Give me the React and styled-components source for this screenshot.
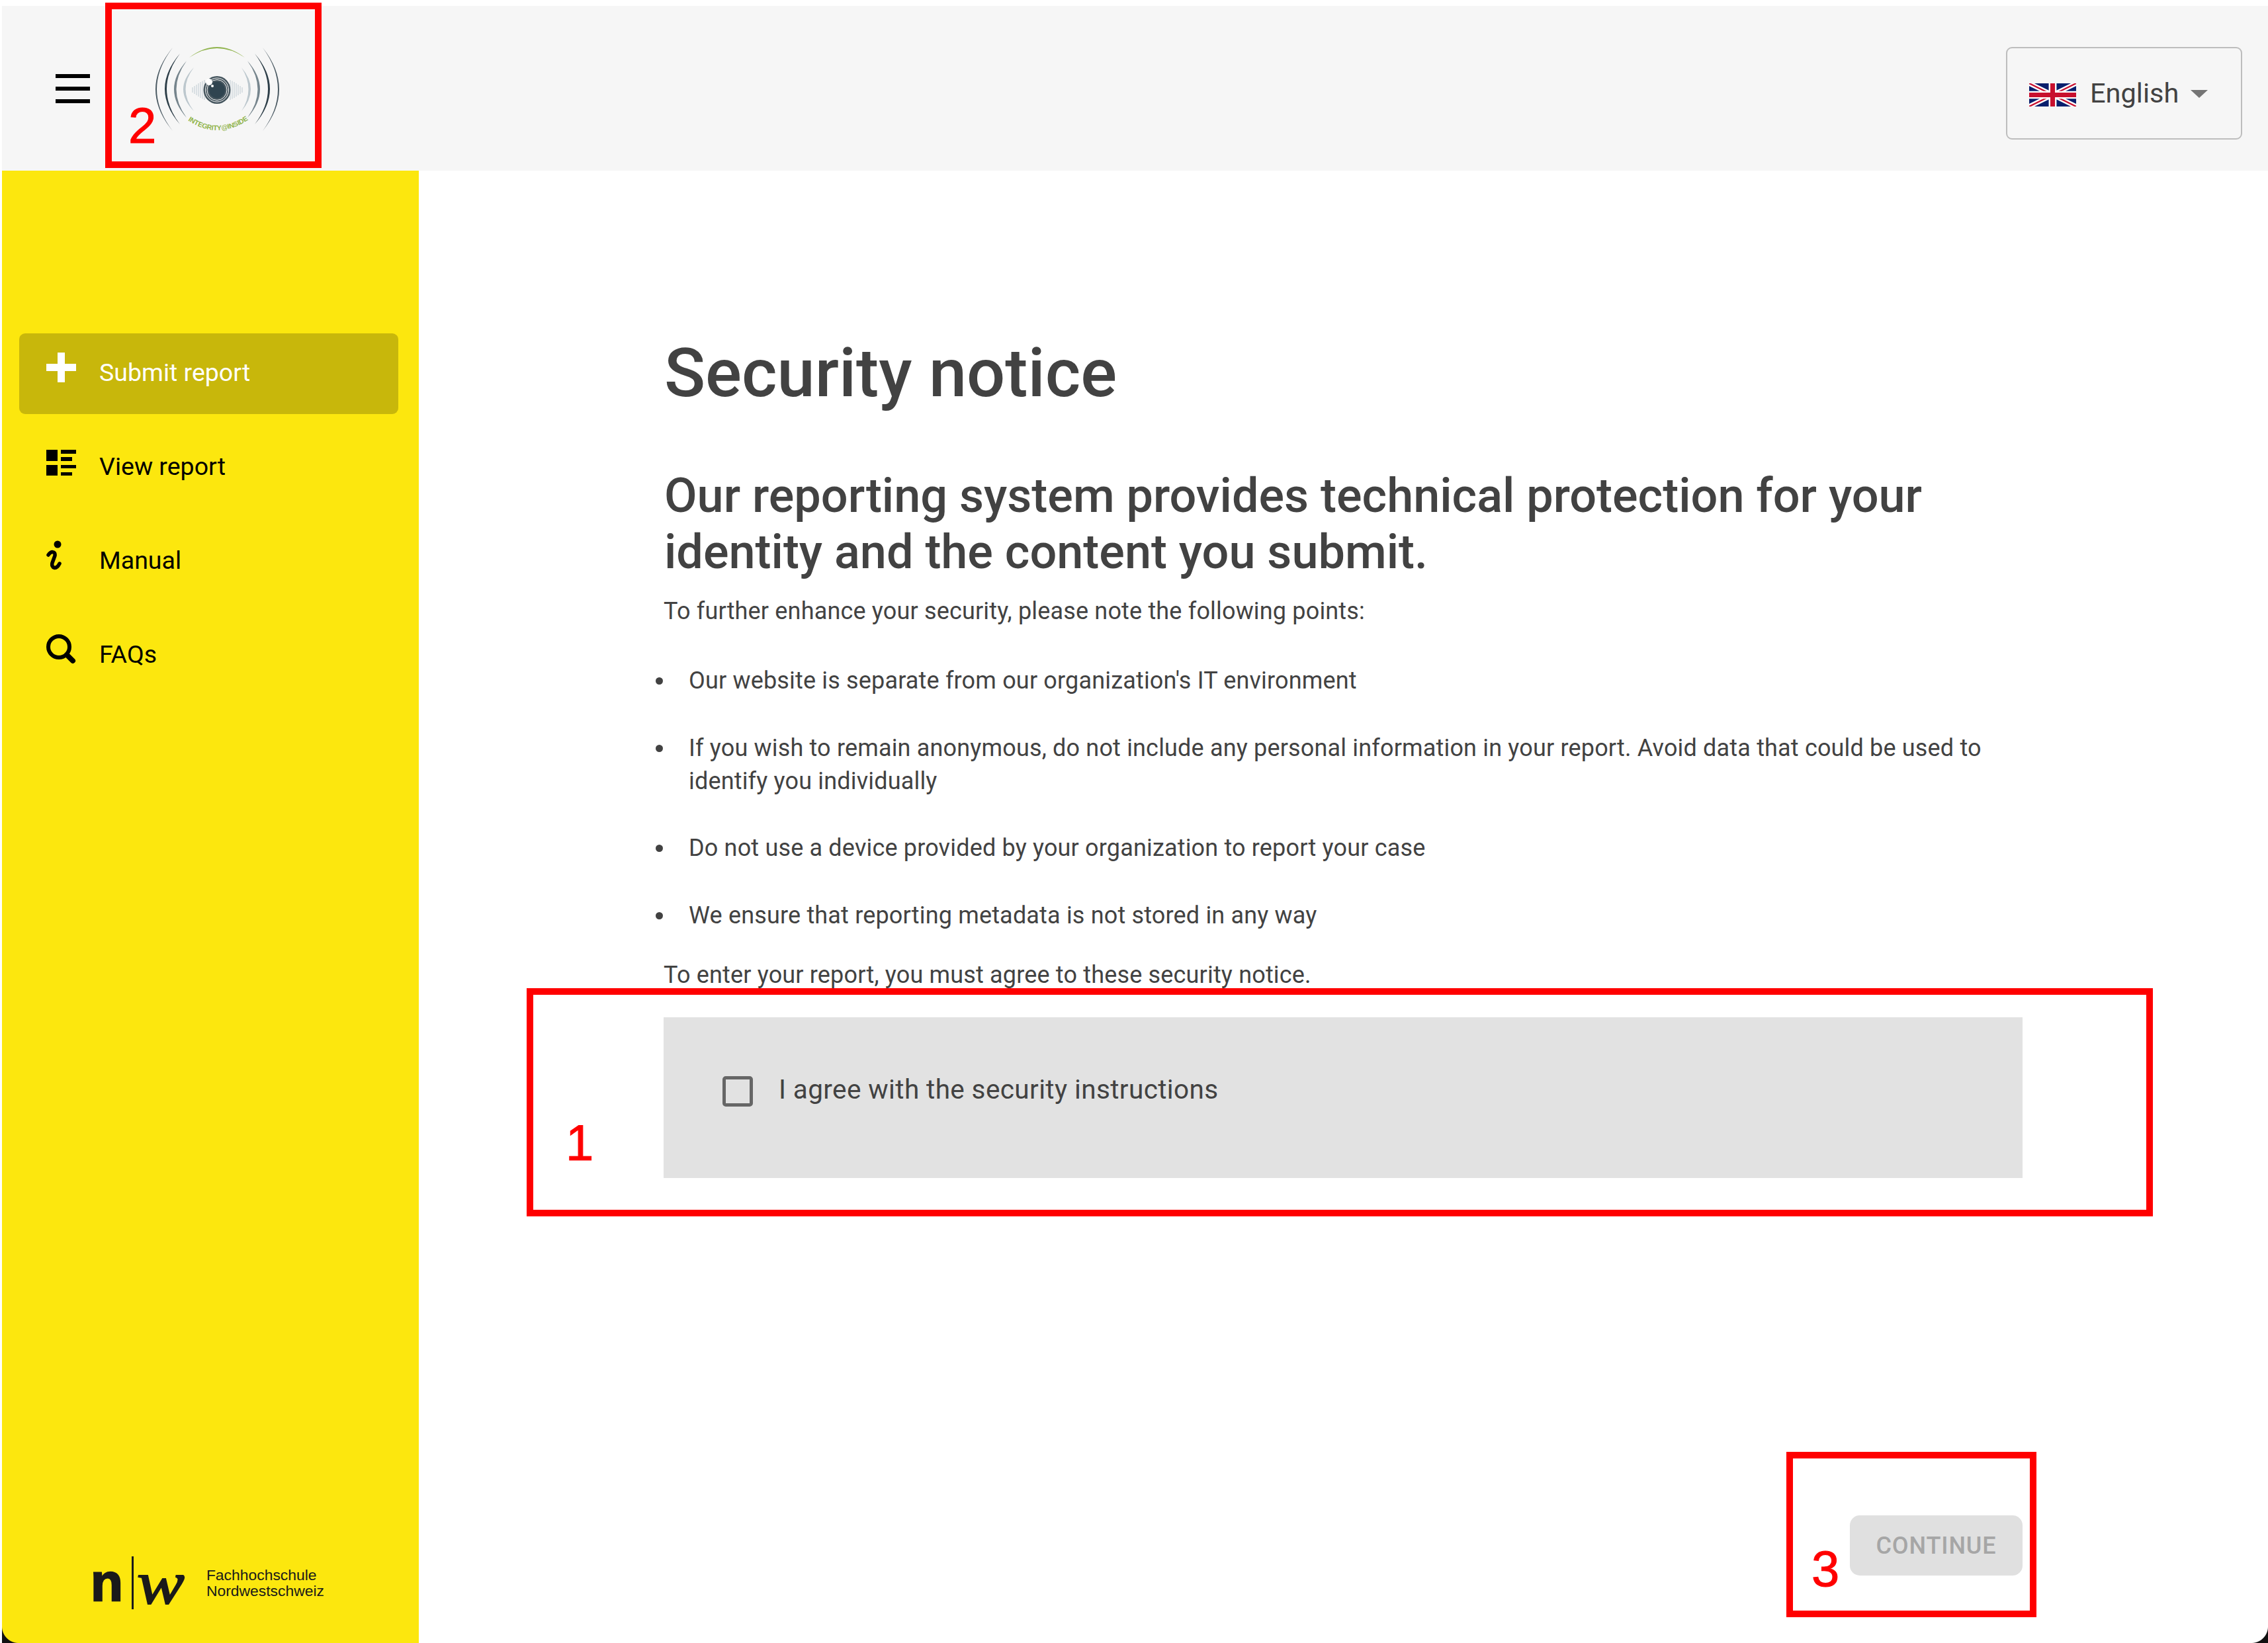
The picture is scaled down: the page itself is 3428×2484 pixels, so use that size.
import React from 'react';
import styled, { createGlobalStyle } from 'styled-components';

const GlobalStyle = createGlobalStyle`
  html, body {
    margin: 0;
    padding: 0;
    background: #fff;
  }
  body {
    font-family: Roboto, "Liberation Sans", sans-serif;
    color: #424242;
  }
`;

const Page = styled.div`
  position: relative;
  display: flex;
  flex-direction: column;
  width: 3428px;
  height: 2484px;
  padding: 9px 0 0 3px;
  box-sizing: border-box;
  overflow: hidden;
  background: #fff;
`;

const Header = styled.header`
  display: flex;
  align-items: center;
  flex: 0 0 249px;
  padding: 0 39px 0 81px;
  background: #f6f6f6;
`;

const MenuButton = styled.svg`
  display: block;
  width: 52px;
  height: 44px;
`;

const LogoMark = styled.svg`
  display: block;
  width: 200px;
  height: 150px;
  margin: 3px 0 0 94px;
`;

const LanguageSelect = styled.div`
  display: flex;
  align-items: center;
  width: 357px;
  height: 140px;
  margin: 15px 0 0 auto;
  padding: 0 0 2px 33px;
  box-sizing: border-box;
  border: 2px solid #bdbdbd;
  border-radius: 9px;
  font-size: 41.5px;
  color: #424242;
`;

const Flag = styled.svg`
  display: block;
  width: 71px;
  height: 35px;
  margin: 7px 21px 0 0;
`;

const Caret = styled.span`
  width: 0;
  height: 0;
  margin: 4px 0 0 18px;
  border-left: 13px solid transparent;
  border-right: 13px solid transparent;
  border-top: 12px solid #757575;
`;

const Body = styled.div`
  display: flex;
  flex: 1;
  min-height: 0;
`;

const Sidebar = styled.aside`
  display: flex;
  flex-direction: column;
  flex: 0 0 630px;
  padding: 246px 31px 51px 26px;
  box-sizing: border-box;
  background: #fce70e;
`;

const Nav = styled.nav`
  display: flex;
  flex-direction: column;
  gap: 20px;
`;

const NavItem = styled.div`
  display: flex;
  align-items: flex-start;
  height: 122px;
  padding: 29px 0 0 41px;
  box-sizing: border-box;
  border-radius: 9px;
  background: ${({ $active }) => ($active ? '#c8b70b' : 'transparent')};
  color: ${({ $active }) => ($active ? '#fff' : '#000')};
`;

const NavIcon = styled.svg`
  display: block;
  flex: 0 0 45px;
  width: 45px;
  height: 45px;
  margin-top: ${({ $offset }) => $offset || 0}px;
`;

const NavLabel = styled.span`
  margin: 9px 0 0 35px;
  font-size: 37.5px;
  line-height: 42px;
`;

const SchoolLogo = styled.div`
  display: flex;
  align-items: center;
  margin: auto 0 0 108px;
  color: #1a1a1a;
`;

const SchoolN = styled.span`
  font-family: "Liberation Sans", sans-serif;
  font-size: 80px;
  font-weight: 700;
  line-height: 80px;
  -webkit-text-stroke: 2.5px #1a1a1a;
`;

const SchoolBar = styled.span`
  width: 3px;
  height: 80px;
  margin: 0 5px 0 13px;
  background: #1a1a1a;
`;

const SchoolW = styled.span`
  display: inline-block;
  width: 67px;
  font-family: "Liberation Serif", serif;
  font-size: 92px;
  font-style: italic;
  line-height: 80px;
  transform: scaleX(1.17);
  transform-origin: 0 50%;
  -webkit-text-stroke: 2px #1a1a1a;
`;

const SchoolName = styled.div`
  margin-left: 38px;
  font-family: "Liberation Sans", sans-serif;
  font-size: 22.9px;
  line-height: 24px;
`;

const Main = styled.main`
  display: flex;
  flex: 1;
  flex-direction: column;
  min-width: 0;
  padding: 0 371px 102px 370px;
  box-sizing: border-box;
`;

const Title = styled.h1`
  margin: 246px 0 0 1px;
  font-size: 102.6px;
  font-weight: 500;
  line-height: 120px;
  color: #424242;
`;

const Subtitle = styled.h2`
  margin: 83px 0 0 1px;
  font-size: 72px;
  font-weight: 500;
  line-height: 85px;
  color: #424242;
`;

const Paragraph = styled.p`
  margin: ${({ $top }) => $top}px 0 0;
  font-size: 36px;
  line-height: 50px;
  letter-spacing: 0.17px;
`;

const NoticeList = styled.ul`
  margin: 55px 0 0;
  padding: 0;
  list-style: none;
`;

const NoticeItem = styled.li`
  display: flex;
  margin-bottom: 51.5px;
  font-size: 36px;
  line-height: 50px;
  letter-spacing: 0.17px;
  &:last-child {
    margin-bottom: 0;
  }
`;

const Dot = styled.span`
  flex: 0 0 11px;
  height: 11px;
  margin: 20px 39px 0 -12px;
  border-radius: 50%;
  background: #424242;
`;

const AgreeBox = styled.div`
  display: flex;
  align-items: center;
  height: 243px;
  margin-top: 39px;
  padding: 89px 0 108px 89px;
  box-sizing: border-box;
  background: #e2e2e2;
`;

const Checkbox = styled.span`
  flex: 0 0 46px;
  height: 46px;
  box-sizing: border-box;
  border: 5px solid #666;
  border-radius: 5px;
`;

const AgreeLabel = styled.span`
  margin: -5px 0 0 39px;
  font-size: 40.5px;
  letter-spacing: 0.38px;
`;

const Actions = styled.div`
  display: flex;
  justify-content: flex-end;
  margin-top: auto;
`;

const ContinueButton = styled.button`
  width: 261px;
  height: 91px;
  padding: 0;
  border: 0;
  border-radius: 15px;
  background: #e0e0e0;
  color: #a6a6a6;
  font-family: Roboto, sans-serif;
  font-size: 36px;
  font-weight: 500;
  letter-spacing: 0.9px;
`;

// red markers laid over the screenshot, placed on the page itself
const Marker = styled.div`
  position: absolute;
  left: ${({ $x }) => $x}px;
  top: ${({ $y }) => $y}px;
  width: ${({ $w }) => $w}px;
  height: ${({ $h }) => $h}px;
  box-sizing: border-box;
  border: 10px solid #f00;
`;

const MarkerNumber = styled.span`
  position: absolute;
  left: ${({ $x }) => $x}px;
  top: ${({ $y }) => $y}px;
  font-family: "Liberation Sans", sans-serif;
  font-size: 76px;
  line-height: 76px;
  color: #f00;
  -webkit-text-stroke: 1px #f00;
`;

// the rounded window corners that show at the bottom of the capture
const WindowCorner = styled.div`
  position: absolute;
  bottom: 0;
  width: 25px;
  height: 25px;
  ${({ $side }) => ($side === 'left' ? 'left: 3px;' : 'right: 0;')}
  background: radial-gradient(
    circle at ${({ $side }) => ($side === 'left' ? '100% 0' : '0 0')},
    transparent 24.5px,
    #111 25.5px
  );
`;

const barHeights = [8, 12, 16, 20, 24, 27, 30];

// tapered arc between two end points, heavier in the middle
const crescent = (x, y1, y2, cx, width) => {
  const midY = (y1 + y2) / 2;
  const dir = cx < x ? 1 : -1;
  return `M${x} ${y1} Q${cx} ${midY} ${x} ${y2} Q${cx + dir * width} ${midY} ${x} ${y1} Z`;
};

const arcs = [
  { x: 261, mirror: 397, y1: 72, y2: 198, c: 209, mc: 447, w: 4, fill: '#4a5962' },
  { x: 272, mirror: 385, y1: 81, y2: 188, c: 226, mc: 431, w: 6, fill: '#2d3e48' },
  { x: 282, mirror: 374, y1: 92, y2: 178, c: 244, mc: 412, w: 7, fill: '#75848c' },
  { x: 293, mirror: 365, y1: 102, y2: 168, c: 261, mc: 393, w: 7, fill: '#bcc7cd' },
];

const Logo = () => (
  <LogoMark viewBox="230 60 200 150">
    <defs>
      <path id="logoTextCurve" d="M284 182 Q328 212 374 182" />
    </defs>
    {arcs.map((a) => (
      <g key={a.x} fill={a.fill}>
        <path d={crescent(a.x, a.y1, a.y2, a.c, a.w)} />
        <path d={crescent(a.mirror, a.y1, a.y2, a.mc, a.w)} />
      </g>
    ))}
    <path d="M286 87 Q328 55 370 87 Q328 59 286 87 Z" fill="#93b552" />
    <g stroke="#c8d2d8" strokeWidth="1.2" fill="none">
      {barHeights.map((h, i) => (
        <path key={`l${i}`} d={`M${291 + i * 3} ${136 - h / 2} V${136 + h / 2}`} />
      ))}
      {barHeights.map((h, i) => (
        <path key={`r${i}`} d={`M${366 - i * 3} ${136 - h / 2} V${136 + h / 2}`} />
      ))}
    </g>
    <ellipse cx="328" cy="136" rx="20.5" ry="21" fill="#46565f" />
    <ellipse cx="328" cy="136" rx="17.5" ry="18" fill="none" stroke="#f6f6f6" strokeWidth="1" />
    <ellipse cx="328" cy="136" rx="15" ry="15.5" fill="none" stroke="#f6f6f6" strokeWidth="1" />
    <ellipse cx="328" cy="136" rx="12" ry="12.5" fill="#2f4450" />
    <circle cx="316" cy="124" r="5" fill="#fff" />
    <circle cx="321" cy="130" r="2" fill="#fff" />
    <text fontFamily='"Liberation Sans", sans-serif' fontSize="10.5" fontWeight="700" fill="#8fb34a">
      <textPath href="#logoTextCurve" textLength="98" lengthAdjust="spacing">
        INTEGRITY@INSIDE
      </textPath>
    </text>
  </LogoMark>
);

const UnionJack = () => (
  <Flag viewBox="0 0 60 30" preserveAspectRatio="none">
    <rect width="60" height="30" fill="#0a1f6d" />
    <path d="M0 0 L60 30 M60 0 L0 30" stroke="#fff" strokeWidth="6" />
    <path d="M0 0 L60 30 M60 0 L0 30" stroke="#c8102e" strokeWidth="2" />
    <path d="M30 0 V30 M0 15 H60" stroke="#fff" strokeWidth="10" />
    <path d="M30 0 V30 M0 15 H60" stroke="#c8102e" strokeWidth="6" />
  </Flag>
);

const PlusIcon = () => (
  <NavIcon viewBox="0 0 45 45">
    <path d="M17 0 H28 V17 H45 V28 H28 V45 H17 V28 H0 V17 H17 Z" fill="currentColor" />
  </NavIcon>
);

const ViewIcon = () => (
  <NavIcon viewBox="0 0 45 45" $offset={5}>
    <path
      d="M0 0 H17 V17 H0 Z M0 23 H17 V39 H0 Z M22 0 H45 V6 H22 Z M22 11 H39 V17 H22 Z M22 23 H45 V28 H22 Z M22 34 H39 V39 H22 Z"
      fill="currentColor"
    />
  </NavIcon>
);

const InfoIcon = () => (
  <NavIcon viewBox="0 0 45 45">
    <circle cx="17" cy="6" r="5.5" fill="currentColor" />
    <path
      d="M3 22 C7 16 14 16 13 23 L9 34 C7 42 15 45 20 35"
      fill="none"
      stroke="currentColor"
      strokeWidth="5.5"
      strokeLinecap="round"
    />
  </NavIcon>
);

const SearchIcon = () => (
  <NavIcon viewBox="0 0 45 45">
    <circle cx="19" cy="19" r="16" fill="none" stroke="currentColor" strokeWidth="6" />
    <path d="M31 31 L40 40" stroke="currentColor" strokeWidth="8" strokeLinecap="round" />
  </NavIcon>
);

const navItems = [
  { label: 'Submit report', Icon: PlusIcon, active: true },
  { label: 'View report', Icon: ViewIcon },
  { label: 'Manual', Icon: InfoIcon },
  { label: 'FAQs', Icon: SearchIcon },
];

const notices = [
  "Our website is separate from our organization's IT environment",
  'If you wish to remain anonymous, do not include any personal information in your report. Avoid data that could be used to identify you individually',
  'Do not use a device provided by your organization to report your case',
  'We ensure that reporting metadata is not stored in any way',
];

const App = () => {
  return (
    <Page>
      <GlobalStyle />
      <Header>
        <MenuButton viewBox="0 0 52 44">
          <path d="M0 0 H52 V6 H0 Z M0 19 H52 V25 H0 Z M0 38 H52 V44 H0 Z" fill="#000" />
        </MenuButton>
        <Logo />
        <LanguageSelect>
          <UnionJack />
          English
          <Caret />
        </LanguageSelect>
      </Header>
      <Body>
        <Sidebar>
          <Nav>
            {navItems.map(({ label, Icon, active }) => (
              <NavItem key={label} $active={active}>
                <Icon />
                <NavLabel>{label}</NavLabel>
              </NavItem>
            ))}
          </Nav>
          <SchoolLogo>
            <SchoolN>n</SchoolN>
            <SchoolBar />
            <SchoolW>w</SchoolW>
            <SchoolName>
              Fachhochschule
              <br />
              Nordwestschweiz
            </SchoolName>
          </SchoolLogo>
        </Sidebar>
        <Main>
          <Title>Security notice</Title>
          <Subtitle>
            Our reporting system provides technical protection for your identity and the content you submit.
          </Subtitle>
          <Paragraph $top={22}>To further enhance your security, please note the following points:</Paragraph>
          <NoticeList>
            {notices.map((notice) => (
              <NoticeItem key={notice}>
                <Dot />
                {notice}
              </NoticeItem>
            ))}
          </NoticeList>
          <Paragraph $top={40}>To enter your report, you must agree to these security notice.</Paragraph>
          <AgreeBox>
            <Checkbox />
            <AgreeLabel>I agree with the security instructions</AgreeLabel>
          </AgreeBox>
          <Actions>
            <ContinueButton>CONTINUE</ContinueButton>
          </Actions>
        </Main>
      </Body>
      <Marker $x={159} $y={4} $w={327} $h={250} />
      <MarkerNumber $x={194} $y={152}>2</MarkerNumber>
      <Marker $x={796} $y={1494} $w={2458} $h={345} />
      <MarkerNumber $x={855} $y={1690}>1</MarkerNumber>
      <Marker $x={2700} $y={2195} $w={378} $h={250} />
      <MarkerNumber $x={2738} $y={2334}>3</MarkerNumber>
      <WindowCorner $side="left" />
      <WindowCorner $side="right" />
    </Page>
  );
};

export default App;
